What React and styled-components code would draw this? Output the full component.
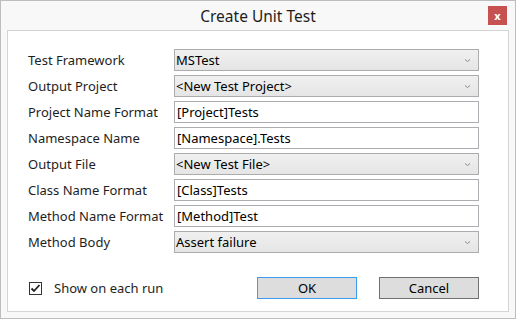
import React from 'react';
import styled, { createGlobalStyle } from 'styled-components';

const GlobalStyle = createGlobalStyle`
  html, body {
    margin: 0;
    padding: 0;
    background: #ffffff;
  }
  body {
    font-family: "Noto Sans", "Open Sans", sans-serif;
  }
`;

const fields = [
  { label: 'Test Framework', value: 'MSTest', kind: 'combo' },
  { label: 'Output Project', value: '<New Test Project>', kind: 'combo' },
  { label: 'Project Name Format', value: '[Project]Tests', kind: 'text' },
  { label: 'Namespace Name', value: '[Namespace].Tests', kind: 'text' },
  { label: 'Output File', value: '<New Test File>', kind: 'combo' },
  { label: 'Class Name Format', value: '[Class]Tests', kind: 'text' },
  { label: 'Method Name Format', value: '[Method]Test', kind: 'text' },
  { label: 'Method Body', value: 'Assert failure', kind: 'combo' },
];

const Window = styled.div`
  box-sizing: border-box;
  width: 516px;
  height: 319px;
  border: 1px solid #bdbdbd;
  background: #f8f8f8;
  display: flex;
  flex-direction: column;
  padding: 0 6px 6px 6px;
`;

const TitleBar = styled.div`
  position: relative;
  height: 29px;
  display: flex;
  align-items: center;
  justify-content: center;
  font-size: 15.5px;
  color: #1e1e1e;
`;

const CloseButton = styled.div`
  position: absolute;
  right: 2px;
  top: 5px;
  width: 19px;
  height: 19px;
  background: #c75050;
  color: #ffffff;
  font-size: 11px;
  font-weight: bold;
  display: flex;
  align-items: center;
  justify-content: center;
  line-height: 1;
`;

const Panel = styled.div`
  flex: 1;
  box-sizing: border-box;
  background: #ffffff;
  border: 1px solid #d4d4d4;
  padding: 18px 0 0 20px;
  display: flex;
  flex-direction: column;
`;

const Form = styled.div`
  display: grid;
  grid-template-columns: 146px 305px;
  grid-auto-rows: 22px;
  row-gap: 4px;
`;

const Label = styled.div`
  font-size: 13px;
  color: #1e1e1e;
  display: flex;
  align-items: center;
`;

const Field = styled.div`
  box-sizing: border-box;
  height: 22px;
  border: 1px solid ${p => (p.$combo ? '#acacac' : '#abadb3')};
  background: ${p => (p.$combo ? 'linear-gradient(#f0f0f0, #e5e5e5)' : '#ffffff')};
  padding: 0 ${p => (p.$combo ? '1px' : '2px')};
  font-size: 13px;
  color: #000000;
  display: flex;
  align-items: center;
  justify-content: space-between;
`;

const Chevron = styled.svg`
  width: 7px;
  height: 5px;
  margin-right: 6px;
`;

const Footer = styled.div`
  display: flex;
  align-items: center;
  margin-top: 24px;
  padding-left: 1px;
`;

const CheckRow = styled.label`
  display: flex;
  align-items: center;
  gap: 12px;
  font-size: 13px;
  color: #1e1e1e;
  width: 228px;
`;

const CheckBox = styled.span`
  box-sizing: border-box;
  width: 13px;
  height: 13px;
  border: 1px solid #333333;
  background: #ffffff;
  display: flex;
  align-items: center;
  justify-content: center;
`;

const Buttons = styled.div`
  display: flex;
  gap: 22px;
`;

const Button = styled.div`
  box-sizing: border-box;
  width: 100px;
  height: 22px;
  background: #dddddd;
  border: 1px solid ${p => (p.$default ? '#3c9af0' : '#707070')};
  font-size: 13px;
  color: #000000;
  display: flex;
  align-items: center;
  justify-content: center;
`;

const App = () => (
  <>
    <GlobalStyle />
    <Window>
      <TitleBar>
        Create Unit Test
        <CloseButton>x</CloseButton>
      </TitleBar>
      <Panel>
        <Form>
          {fields.map(f => (
            <React.Fragment key={f.label}>
              <Label>{f.label}</Label>
              <Field $combo={f.kind === 'combo'}>
                <span>{f.value}</span>
                {f.kind === 'combo' && (
                  <Chevron viewBox="0 0 7 5">
                    <path d="M1 1.5 L3.5 3.5 L6 1.5" fill="none" stroke="#8a8a8a" strokeWidth="1" />
                  </Chevron>
                )}
              </Field>
            </React.Fragment>
          ))}
        </Form>
        <Footer>
          <CheckRow>
            <CheckBox>
              <svg width="11" height="11" viewBox="0 0 11 11">
                <path d="M1.5 5.5 L4 8 L9.5 2" fill="none" stroke="#222222" strokeWidth="1.8" />
              </svg>
            </CheckBox>
            Show on each run
          </CheckRow>
          <Buttons>
            <Button $default>OK</Button>
            <Button>Cancel</Button>
          </Buttons>
        </Footer>
      </Panel>
    </Window>
  </>
);

export default App;
